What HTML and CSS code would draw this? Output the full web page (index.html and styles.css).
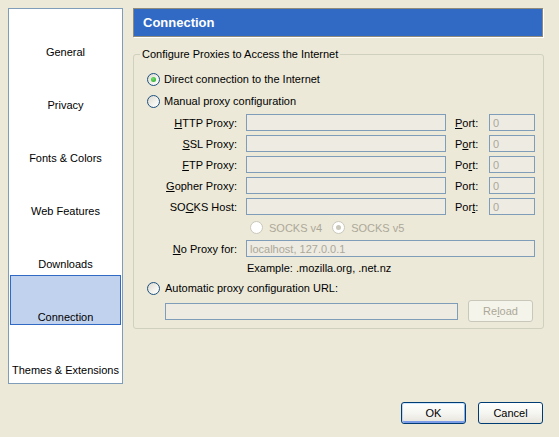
FILE: index.html
```html
<!DOCTYPE html>
<html>
<head>
<meta charset="utf-8">
<title>Options</title>
<link rel="stylesheet" href="styles.css">
</head>
<body>
<div class="window">
  <div class="top">
    <nav class="sidebar">
      <div class="cat">General</div>
      <div class="cat">Privacy</div>
      <div class="cat">Fonts &amp; Colors</div>
      <div class="cat">Web Features</div>
      <div class="cat">Downloads</div>
      <div class="cat selected">Connection</div>
      <div class="cat">Themes &amp; Extensions</div>
    </nav>
    <div class="panel">
      <div class="header">Connection</div>
      <fieldset class="group">
        <legend>Configure Proxies to Access the Internet</legend>
        <div class="radio-row first"><span class="radio checked"></span><span>Direct connection to the Internet</span></div>
        <div class="radio-row"><span class="radio"></span><span>Manual proxy configuration</span></div>
        <div class="proxy-grid">
          <span class="lbl"><u>H</u>TTP Proxy:</span><input class="field" disabled><span class="port-lbl"><u>P</u>ort:</span><input class="field port" disabled value="0">
          <span class="lbl"><u>S</u>SL Proxy:</span><input class="field" disabled><span class="port-lbl">P<u>o</u>rt:</span><input class="field port" disabled value="0">
          <span class="lbl"><u>F</u>TP Proxy:</span><input class="field" disabled><span class="port-lbl">Po<u>r</u>t:</span><input class="field port" disabled value="0">
          <span class="lbl"><u>G</u>opher Proxy:</span><input class="field" disabled><span class="port-lbl">Port:</span><input class="field port" disabled value="0">
          <span class="lbl">SO<u>C</u>KS Host:</span><input class="field" disabled><span class="port-lbl">Por<u>t</u>:</span><input class="field port" disabled value="0">
          <div class="socks">
            <span class="opt"><span class="radio disabled"></span><span>SOCKS v4</span></span>
            <span class="opt"><span class="radio disabled checked"></span><span>SOCKS v5</span></span>
          </div>
          <span class="lbl"><u>N</u>o Proxy for:</span><input class="field wide" disabled value="localhost, 127.0.0.1">
          <span class="example">Example: .mozilla.org, .net.nz</span>
        </div>
        <div class="radio-row auto"><span class="radio"></span><span>Automatic proxy configuration URL:</span></div>
        <div class="url-row"><input class="field url" disabled><button class="btn disabled" disabled>Re<u>l</u>oad</button></div>
      </fieldset>
    </div>
  </div>
  <div class="footer">
    <button class="btn default">OK</button>
    <button class="btn">Cancel</button>
  </div>
</div>
</body>
</html>
```
FILE: styles.css
```css
html, body {
  margin: 0;
  background: #ECE9D8;
}
body {
  font: 11px "Liberation Sans", Arial, sans-serif;
  color: #000;
}
.window {
  width: 559px;
  height: 437px;
  overflow: hidden;
}
.top {
  display: flex;
  gap: 10px;
  padding: 8px 0 0 8px;
}
.sidebar {
  box-sizing: border-box;
  width: 115px;
  height: 376px;
  border: 1px solid #7F9DB9;
  background: #fff;
  padding: 1px;
  display: flex;
  flex-direction: column;
  gap: 3px;
}
.cat {
  box-sizing: border-box;
  height: 50px;
  flex: none;
  border: 1px solid transparent;
  display: flex;
  align-items: flex-end;
  justify-content: center;
  padding-bottom: 0;
  line-height: 13px;
  white-space: nowrap;
}
.cat.selected {
  background: #C1D2EE;
  border-color: #316AC5;
}
.panel {
  width: 411px;
}
.header {
  box-sizing: border-box;
  width: 410px;
  height: 29px;
  border: 1px solid #8F8B7C;
  box-shadow: 1px 1px 0 #fff;
  background: #316AC5;
  color: #fff;
  font-weight: bold;
  font-size: 13px;
  line-height: 27px;
  padding-left: 9px;
}
.group {
  box-sizing: border-box;
  width: 411px;
  min-width: 0;
  margin: 11px 0 0 0;
  padding: 0 0 6px 6px;
  border: 1px solid #D0D0BF;
  border-radius: 3px;
}
.group legend {
  padding: 0 2px;
  line-height: 13px;
}
.radio-row {
  display: flex;
  align-items: center;
  gap: 4px;
  height: 22px;
  margin-left: 7px;
}
.radio-row.first {
  margin-top: 7px;
}
.radio-row.auto {
  margin-top: -1px;
  gap: 5px;
}
.radio {
  position: relative;
  flex: none;
  box-sizing: border-box;
  width: 13px;
  height: 13px;
  border-radius: 50%;
  border: 1px solid #1C5180;
  background: linear-gradient(135deg, #DCD9CF 0%, #F4F3EE 60%, #fff 100%);
}
.radio.checked::after {
  content: "";
  position: absolute;
  left: 3px;
  top: 3px;
  width: 5px;
  height: 5px;
  border-radius: 50%;
  background: radial-gradient(circle at 40% 35%, #6EE06A, #21A121);
}
.radio.disabled {
  border-color: #CAC8BB;
  background: #fff;
}
.radio.disabled.checked::after {
  background: #CAC8BB;
}
.proxy-grid {
  display: grid;
  grid-template-columns: 86px 209px 34px 46px;
  grid-auto-rows: 17px;
  row-gap: 4px;
  align-items: center;
  margin: 2px 0 0 20px;
}
.lbl {
  text-align: right;
  padding-right: 9px;
  white-space: nowrap;
}
.port-lbl {
  white-space: nowrap;
}
.field {
  box-sizing: border-box;
  display: block;
  height: 17px;
  width: 200px;
  margin: 0;
  border: 1px solid #7F9DB9;
  background: #EDEBE2;
  font: inherit;
  color: #ACA899;
  padding: 0 3px;
  -webkit-text-fill-color: #ACA899;
  opacity: 1;
}
.field.port {
  width: 46px;
}
.field.wide {
  grid-column: 2 / 5;
  width: 289px;
}
.field.url {
  width: 293px;
}
.socks {
  grid-column: 2 / 5;
  display: flex;
  align-items: center;
  gap: 10px;
  padding-left: 4px;
  color: #ACA899;
}
.opt {
  display: flex;
  align-items: center;
  gap: 6px;
}
.example {
  grid-column: 2 / 5;
  align-self: start;
  padding-left: 1px;
  line-height: 14px;
}
.url-row {
  display: flex;
  align-items: center;
  gap: 10px;
  height: 22px;
  margin: 1px 0 0 25px;
}
.footer {
  display: flex;
  justify-content: flex-end;
  gap: 12px;
  padding-right: 16px;
  margin-top: 18px;
}
.btn {
  box-sizing: border-box;
  width: 65px;
  height: 22px;
  margin: 0;
  padding: 0;
  border: 1px solid #003C74;
  border-radius: 3px;
  background: linear-gradient(#FFFFFF, #F4F4F0 55%, #E6E3D9);
  font: inherit;
  color: #000;
}
.btn.default {
  box-shadow: inset 0 1px 0 #CEE7FF, inset 1px 0 0 #BCD4F6, inset -1px 0 0 #89ADE4, inset 0 -2px 0 #7D9CE8;
}
.btn.disabled {
  border-color: #C9C7BA;
  background: #F5F4EA;
  color: #ACA899;
}
```
